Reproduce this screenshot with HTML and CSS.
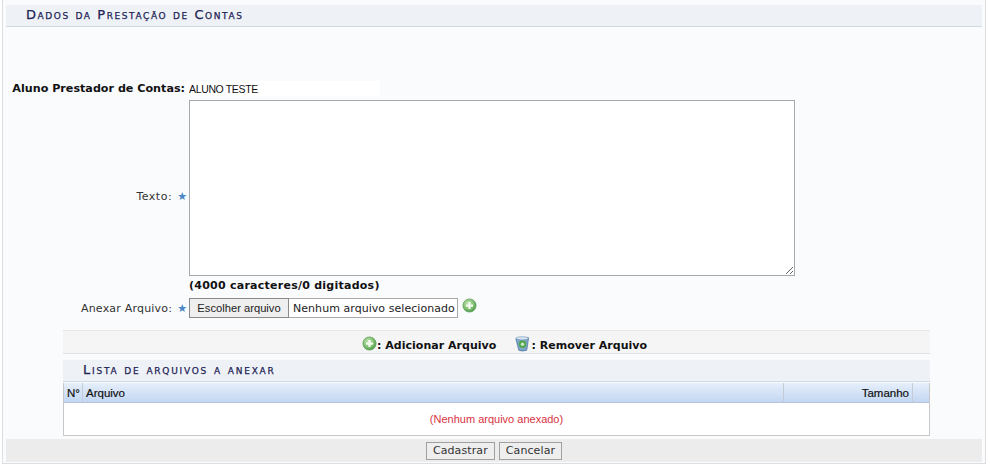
FILE: index.html
```html
<!DOCTYPE html>
<html lang="pt">
<head>
<meta charset="utf-8">
<title>Dados da Prestação de Contas</title>
<link rel="stylesheet" href="styles.css">
</head>
<body>
<svg class="defs" width="0" height="0" aria-hidden="true">
  <defs>
    <radialGradient id="greenBall" cx="40%" cy="35%" r="70%">
      <stop offset="0" stop-color="#c4e5b4"/>
      <stop offset="0.6" stop-color="#7fbf70"/>
      <stop offset="1" stop-color="#4f9a4a"/>
    </radialGradient>
    <symbol id="add" viewBox="0 0 16 16">
      <circle cx="8" cy="8" r="7" fill="url(#greenBall)" stroke="#5c9c58" stroke-width="0.8"/>
      <path d="M8 4.2v7.6M4.2 8h7.6" stroke="#f4fbf0" stroke-width="2.4"/>
    </symbol>
    <symbol id="bin" viewBox="0 0 18 18">
      <path d="M2 3.5 L15.5 2.5 L13.5 15.5 Q8.5 17.5 5 15.5 Z" fill="#7ea6c8" stroke="#3d6a94" stroke-width="0.7"/>
      <ellipse cx="8.7" cy="3" rx="6.8" ry="1.7" fill="#d8e6f2" stroke="#5f88ad" stroke-width="0.6"/>
      <circle cx="9" cy="9.2" r="3.9" fill="#4fa64a"/>
      <circle cx="9" cy="9.2" r="1.8" fill="#cfe9c6"/>
    </symbol>
  </defs>
</svg>
<main class="panel">
  <h2 class="caption">Dados da Prestação de Contas</h2>
  <form class="form">
    <div class="row row-student">
      <span class="label label-strong">Aluno Prestador de Contas:</span>
      <span class="student">ALUNO TESTE</span>
    </div>
    <div class="row row-text">
      <label class="label label-text" for="texto">Texto:<span class="star">★</span></label>
      <textarea class="textarea" id="texto"></textarea>
    </div>
    <div class="row row-count">
      <span class="label"></span>
      <strong class="count">(4000 caracteres/0 digitados)</strong>
    </div>
    <div class="row row-file">
      <span class="label">Anexar Arquivo:<span class="star">★</span></span>
      <span class="file">
        <span class="file-button">Escolher arquivo</span>
        <span class="file-name">Nenhum arquivo selecionado</span>
      </span>
      <svg class="icon-add file-add"><use href="#add"/></svg>
    </div>
    <section class="files">
      <div class="legend">
        <span class="legend-item"><svg class="icon-add"><use href="#add"/></svg>: Adicionar Arquivo</span>
        <span class="legend-item"><svg class="icon-bin"><use href="#bin"/></svg>: Remover Arquivo</span>
      </div>
      <h3 class="subcaption">Lista de arquivos a anexar</h3>
      <table class="table">
        <thead>
          <tr>
            <th class="col-n">N°</th>
            <th class="col-name">Arquivo</th>
            <th class="col-size">Tamanho</th>
            <th class="col-end"></th>
          </tr>
        </thead>
        <tbody>
          <tr><td class="empty" colspan="4">(Nenhum arquivo anexado)</td></tr>
        </tbody>
      </table>
    </section>
    <div class="footer">
      <button class="btn" type="button">Cadastrar</button>
      <button class="btn" type="button">Cancelar</button>
    </div>
  </form>
</main>
</body>
</html>
```
FILE: styles.css
```css
* { box-sizing: border-box; }
html, body { margin: 0; padding: 0; background: #fff; }
body {
  width: 990px;
  height: 466px;
  overflow: hidden;
  font-family: "DejaVu Sans", Verdana, sans-serif;
  font-size: 11px;
  color: #222;
}
.defs { display: block; height: 0; }
.panel {
  width: 984px;
  height: 464px;
  margin-left: 2px;
  padding: 5px 3px 2px 3px;
  background: #f9fbfd;
  border: 1px solid #dcdfe2;
  border-top: 0;
}
.caption {
  margin: 0;
  height: 22px;
  padding-left: 20px;
  background: #eef2f7;
  border-bottom: 1px solid #cfd8e3;
  font-size: 13px;
  font-weight: normal;
  font-variant: small-caps;
  letter-spacing: 1.58px;
  line-height: 20px;
  color: #222255;
  -webkit-text-stroke: 0.25px #222255;
}
.form { display: flex; flex-direction: column; }
.row { display: flex; align-items: center; }
.label {
  flex: none;
  width: 183px;
  text-align: right;
  color: #333;
  letter-spacing: 0.2px;
}
.label-strong { width: 179px; margin-right: 1px; font-weight: bold; color: #111; font-size: 11.15px; letter-spacing: 0; }
.label-text { padding-top: 16px; letter-spacing: 0.5px; }
.star { margin: 0 2px 0 5px; color: #4a86c8; font-size: 11px; letter-spacing: 0; }
.row-student { margin-top: 53px; height: 16px; }
.student {
  width: 194px;
  height: 15px;
  padding-left: 3px;
  background: #fff;
  font-family: "Liberation Sans", Arial, sans-serif;
  font-size: 10.5px;
  line-height: 16px;
  letter-spacing: -0.35px;
  color: #111;
}
.row-text { margin-top: 4px; height: 176px; }
.textarea {
  width: 606px;
  height: 176px;
  margin: 0;
  background: #fff;
  border: 1px solid #a9a9a9;
  resize: both;
}
.row-count { margin-top: 2px; height: 14px; }
.count { font-size: 11px; color: #111; letter-spacing: 0.25px; }
.row-file { margin-top: 4px; height: 24px; }
.file {
  display: flex;
  width: 269px;
  height: 20px;
  border: 1px solid #a9a9a9;
  background: #fff;
}
.file-button {
  width: 100px;
  margin: -1px 0 -1px -1px;
  background: #efefef;
  border: 1px solid #8a8a8a;
  font-family: "Liberation Sans", Arial, sans-serif;
  font-size: 11.2px;
  line-height: 19px;
  text-align: center;
  color: #222;
}
.file-name { padding-left: 4px; line-height: 20px; white-space: nowrap; letter-spacing: 0.05px; }
.icon-add { display: block; width: 15px; height: 15px; flex: none; }
.file-add { margin: -6px 0 0 4px; }
.icon-bin { display: block; width: 17px; height: 18px; flex: none; margin-top: -3px; }
.files { margin: 10px 0 0 57px; width: 867px; }
.legend {
  display: flex;
  justify-content: center;
  gap: 18px;
  height: 24px;
  padding: 4px 0 0 15px;
  background: #f5f5f5;
  border-top: 1px solid #e4e6e8;
  border-bottom: 1px solid #e0e3e6;
  font-weight: bold;
  color: #111;
  letter-spacing: 0.03px;
}
.legend-item { display: flex; align-items: center; height: 18px; padding-top: 3px; }
.legend-item .icon-add { margin: -4px 0 0 1px; }
.subcaption {
  margin: 6px 0 0 0;
  height: 22px;
  padding-left: 20px;
  background: #eef2f7;
  border-bottom: 1px solid #cfd8e3;
  font-size: 13px;
  font-weight: normal;
  font-variant: small-caps;
  letter-spacing: 1.77px;
  line-height: 20px;
  color: #222255;
  -webkit-text-stroke: 0.25px #222255;
}
.table {
  display: block;
  width: 867px;
  margin-top: 1px;
  background: #fff;
  border: 1px solid #c8c8c8;
  border-top: 0;
  border-collapse: collapse;
  font-family: "Liberation Sans", Arial, sans-serif;
}
.table thead, .table tbody { display: block; }
.table thead tr { display: flex; height: 20px; background: linear-gradient(#e6effb, #c3d7f3); border-bottom: 1px solid #b5c4d8; }
.table tbody tr { display: block; }
.table th {
  display: block;
  padding: 0 3px;
  font-size: 11.5px;
  line-height: 20px;
  color: #111;
  -webkit-text-stroke: 0.2px #111;
  font-weight: normal;
  text-align: left;
  border-right: 1px solid #c4ccd6;
}
.col-n { width: 19px; }
.col-name { width: 701px; }
.col-size { width: 129px; text-align: right !important; }
.table .col-end { flex: 1; border-right: 0; }
.empty {
  display: block;
  height: 32px;
  text-align: center;
  font-size: 11px;
  line-height: 31px;
  color: #d9333f;
}
.footer {
  display: flex;
  justify-content: center;
  gap: 4px;
  align-items: center;
  height: 23px;
  margin-top: 3px;
  padding-top: 1px;
  background: #ececec;
}
.btn {
  height: 18px;
  margin: 0;
  padding: 0 6px;
  background: #eee;
  border: 1px solid #a0a0a0;
  font-family: "DejaVu Sans", Verdana, sans-serif;
  font-size: 11px;
  line-height: 14px;
  letter-spacing: 0.1px;
  color: #333;
}
```
